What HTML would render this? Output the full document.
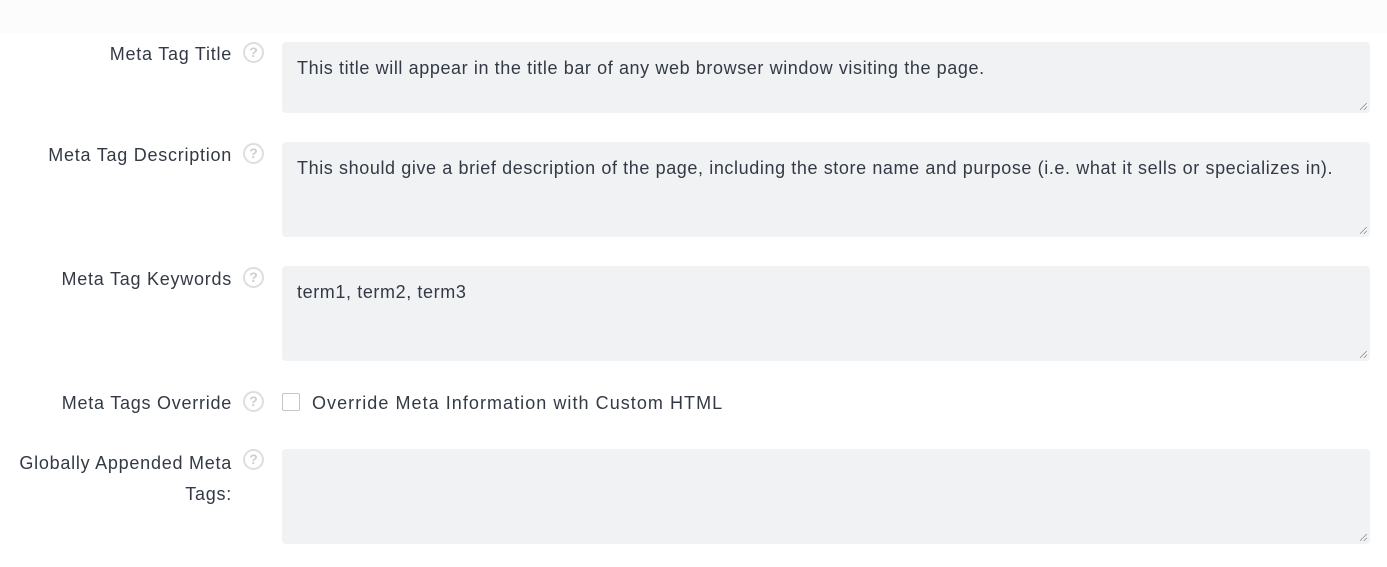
<!DOCTYPE html>
<html><head><style>
body{margin:0;width:1387px;height:567px;background:#fff;font-family:"Liberation Sans",sans-serif;color:#333a45;position:relative;overflow:hidden}
.top{position:absolute;left:0;top:0;width:1387px;height:33px;background:#fcfcfc}
.lbl{position:absolute;right:1155px;font-size:18px;letter-spacing:0.75px;text-align:right;line-height:27px;width:225px}
.q{position:absolute;left:243px;width:17px;height:17px;border:2px solid #dcdee0;border-radius:50%;color:#ccced1;font-size:14px;font-weight:bold;line-height:17px;text-align:center;box-sizing:content-box}
.ta{position:absolute;left:282px;width:1088px;background:#f1f2f4;border-radius:4px;font-size:18px;letter-spacing:0.6px;padding:14px 15px;box-sizing:border-box;line-height:24px}
.ta:after{content:"";position:absolute;right:3px;bottom:3px;width:7px;height:7px;background:linear-gradient(135deg,transparent 45%,#888 45%,#888 52%,transparent 52%,transparent 72%,#888 72%,#888 80%,transparent 80%)}
.cb{position:absolute;left:282px;top:393px;width:16px;height:16px;border:1.5px solid #c4c6ca;border-radius:2px;background:#fff}
</style></head><body>
<div class="top"></div>
<div class="lbl" style="top:41px">Meta Tag Title</div><div class="q" style="top:42px">?</div>
<div class="ta" style="top:42px;height:71px">This title will appear in the title bar of any web browser window visiting the page.</div>
<div class="lbl" style="top:142px">Meta Tag Description</div><div class="q" style="top:143px">?</div>
<div class="ta" style="top:142px;height:95px">This should give a brief description of the page, including the store name and purpose (i.e. what it sells or specializes in).</div>
<div class="lbl" style="top:266px">Meta Tag Keywords</div><div class="q" style="top:267px">?</div>
<div class="ta" style="top:266px;height:95px">term1, term2, term3</div>
<div class="lbl" style="top:390px">Meta Tags Override</div><div class="q" style="top:391px">?</div>
<div class="cb"></div>
<div style="position:absolute;left:312px;top:390px;font-size:18px;letter-spacing:1.05px;line-height:27px">Override Meta Information with Custom HTML</div>
<div class="lbl" style="top:448px;line-height:31px">Globally Appended Meta Tags:</div><div class="q" style="top:449px">?</div>
<div class="ta" style="top:449px;height:95px"></div>
</body></html>
